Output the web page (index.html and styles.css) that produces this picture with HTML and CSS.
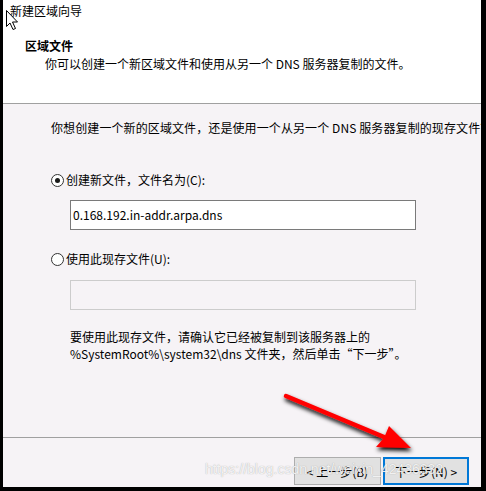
FILE: index.html
```html
<!DOCTYPE html>
<html lang="zh-CN">
<head>
<meta charset="utf-8">
<link rel="stylesheet" href="styles.css">
</head>
<body>
<div class="window">
  <div class="header">
    <div class="title">新建区域向导</div>
    <div class="heading">区域文件</div>
    <div class="desc">你可以创建一个新区域文件和使用从另一个 DNS 服务器复制的文件。</div>
  </div>
  <div class="rule"></div>
  <div class="body">
    <div class="question">你想创建一个新的区域文件，还是使用一个从另一个 DNS 服务器复制的现存文件？</div>
    <label class="option opt1"><span class="radio checked"></span>创建新文件，文件名为(C):</label>
    <div class="field">0.168.192.in-addr.arpa.dns</div>
    <label class="option opt2"><span class="radio"></span>使用此现存文件(U):</label>
    <div class="field disabled"></div>
    <div class="note">要使用此现存文件，请确认它已经被复制到该服务器上的<br>%SystemRoot%\system32\dns 文件夹，然后单击“下一步”。</div>
  </div>
  <div class="rule"></div>
  <div class="footer">
    <button class="btn">&lt; 上一步(B)</button>
    <button class="btn primary">下一步(N) &gt;</button>
  </div>

  <svg class="cursor" width="14" height="22" viewBox="0 0 14 22">
    <path d="M1.5 1.5 L1.5 17.5 L5 14 L8 20.5 L10.5 19.5 L7.5 13 L12.5 13 Z" fill="#fff" stroke="#000" stroke-width="1" stroke-linejoin="miter"/>
  </svg>
  <div class="watermark">https://blog.csdn.net/weixin_42436332</div>
  <svg class="arrow" width="150" height="70" viewBox="0 0 150 70">
    <defs>
      <filter id="sh" x="-20%" y="-20%" width="140%" height="160%">
        <feGaussianBlur in="SourceAlpha" stdDeviation="2"/>
        <feOffset dx="1" dy="3" result="b"/>
        <feMerge><feMergeNode in="b"/><feMergeNode in="SourceGraphic"/></feMerge>
      </filter>
    </defs>
    <g filter="url(#sh)">
      <line x1="6" y1="8" x2="104" y2="49" stroke="#f00" stroke-width="4.5" stroke-linecap="round"/>
      <path d="M131 60 L96 59 L104 50 L109 38 Z" fill="#f00"/>
    </g>
  </svg>
</div>
</body>
</html>
```

FILE: styles.css
```css
html, body {
  margin: 0;
  padding: 0;
  background: #000;
}
body {
  width: 486px;
  height: 491px;
  overflow: hidden;
  font-family: "Noto Sans CJK SC", "Noto Sans", sans-serif;
  font-size: 12px;
  color: #000;
}
.window {
  position: relative;
  margin-left: 3px;
  width: 478px;
  height: 487px;
  display: flex;
  flex-direction: column;
  background: #f6f3f6;
}
.header {
  height: 103px;
  background: #fff;
  line-height: 16px;
  flex: none;
}
.title {
  margin: 3px 0 0 7px;
}
.heading {
  margin: 19px 0 0 22px;
  font-weight: bold;
}
.desc {
  margin: 2px 0 0 42px;
}
.rule {
  height: 1px;
  background: #a0a0a0;
  flex: none;
}
.body {
  flex: 1;
  padding: 16px 0 0 48px;
  line-height: 16px;
  overflow: hidden;
}
.question {
  white-space: nowrap;
  letter-spacing: 0.1px;
}
.option {
  display: flex;
  align-items: center;
  gap: 2px;
}
.opt1 { margin-top: 36px; }
.opt2 { margin-top: 21px; }
.radio {
  width: 11px;
  height: 11px;
  border: 1px solid #333;
  border-radius: 50%;
  background: #fff;
  display: inline-flex;
  align-items: center;
  justify-content: center;
  flex: none;
}
.radio.checked::after {
  content: "";
  width: 5px;
  height: 5px;
  border-radius: 50%;
  background: #1a1a1a;
}
.field {
  margin: 12px 0 0 19px;
  width: 342px;
  height: 28px;
  border: 1px solid #7a7a7a;
  background: #fff;
  padding-left: 2px;
  line-height: 27px;
  box-sizing: content-box;
}
.field.disabled {
  margin-top: 13px;
  border-color: #cccccc;
  background: #f6f3f6;
}
.note {
  margin: 18px 0 0 19px;
  line-height: 17px;
}
.footer {
  height: 49px;
  flex: none;
  display: flex;
  justify-content: flex-end;
  align-items: flex-start;
  gap: 2px;
  padding: 19px 12px 0 0;
  box-sizing: border-box;
}
.btn {
  width: 87px;
  height: 28px;
  font: inherit;
  color: #000;
  background: #e1e1e1;
  border: 1px solid #adadad;
  padding: 0;
  box-sizing: border-box;
}
.btn.primary {
  width: 86px;
  border: 2px solid #0078d7;
}
.cursor {
  position: absolute;
  left: 2px;
  top: 9px;
}
.watermark {
  position: absolute;
  left: 202px;
  top: 461px;
  font-family: "Liberation Sans", Arial, sans-serif;
  font-size: 14px;
  color: rgba(255, 255, 255, 0.85);
  text-shadow: 0 0 1px rgba(110, 110, 110, 0.6);
  white-space: nowrap;
  pointer-events: none;
}
.arrow {
  position: absolute;
  left: 277px;
  top: 388px;
  overflow: visible;
}
```
